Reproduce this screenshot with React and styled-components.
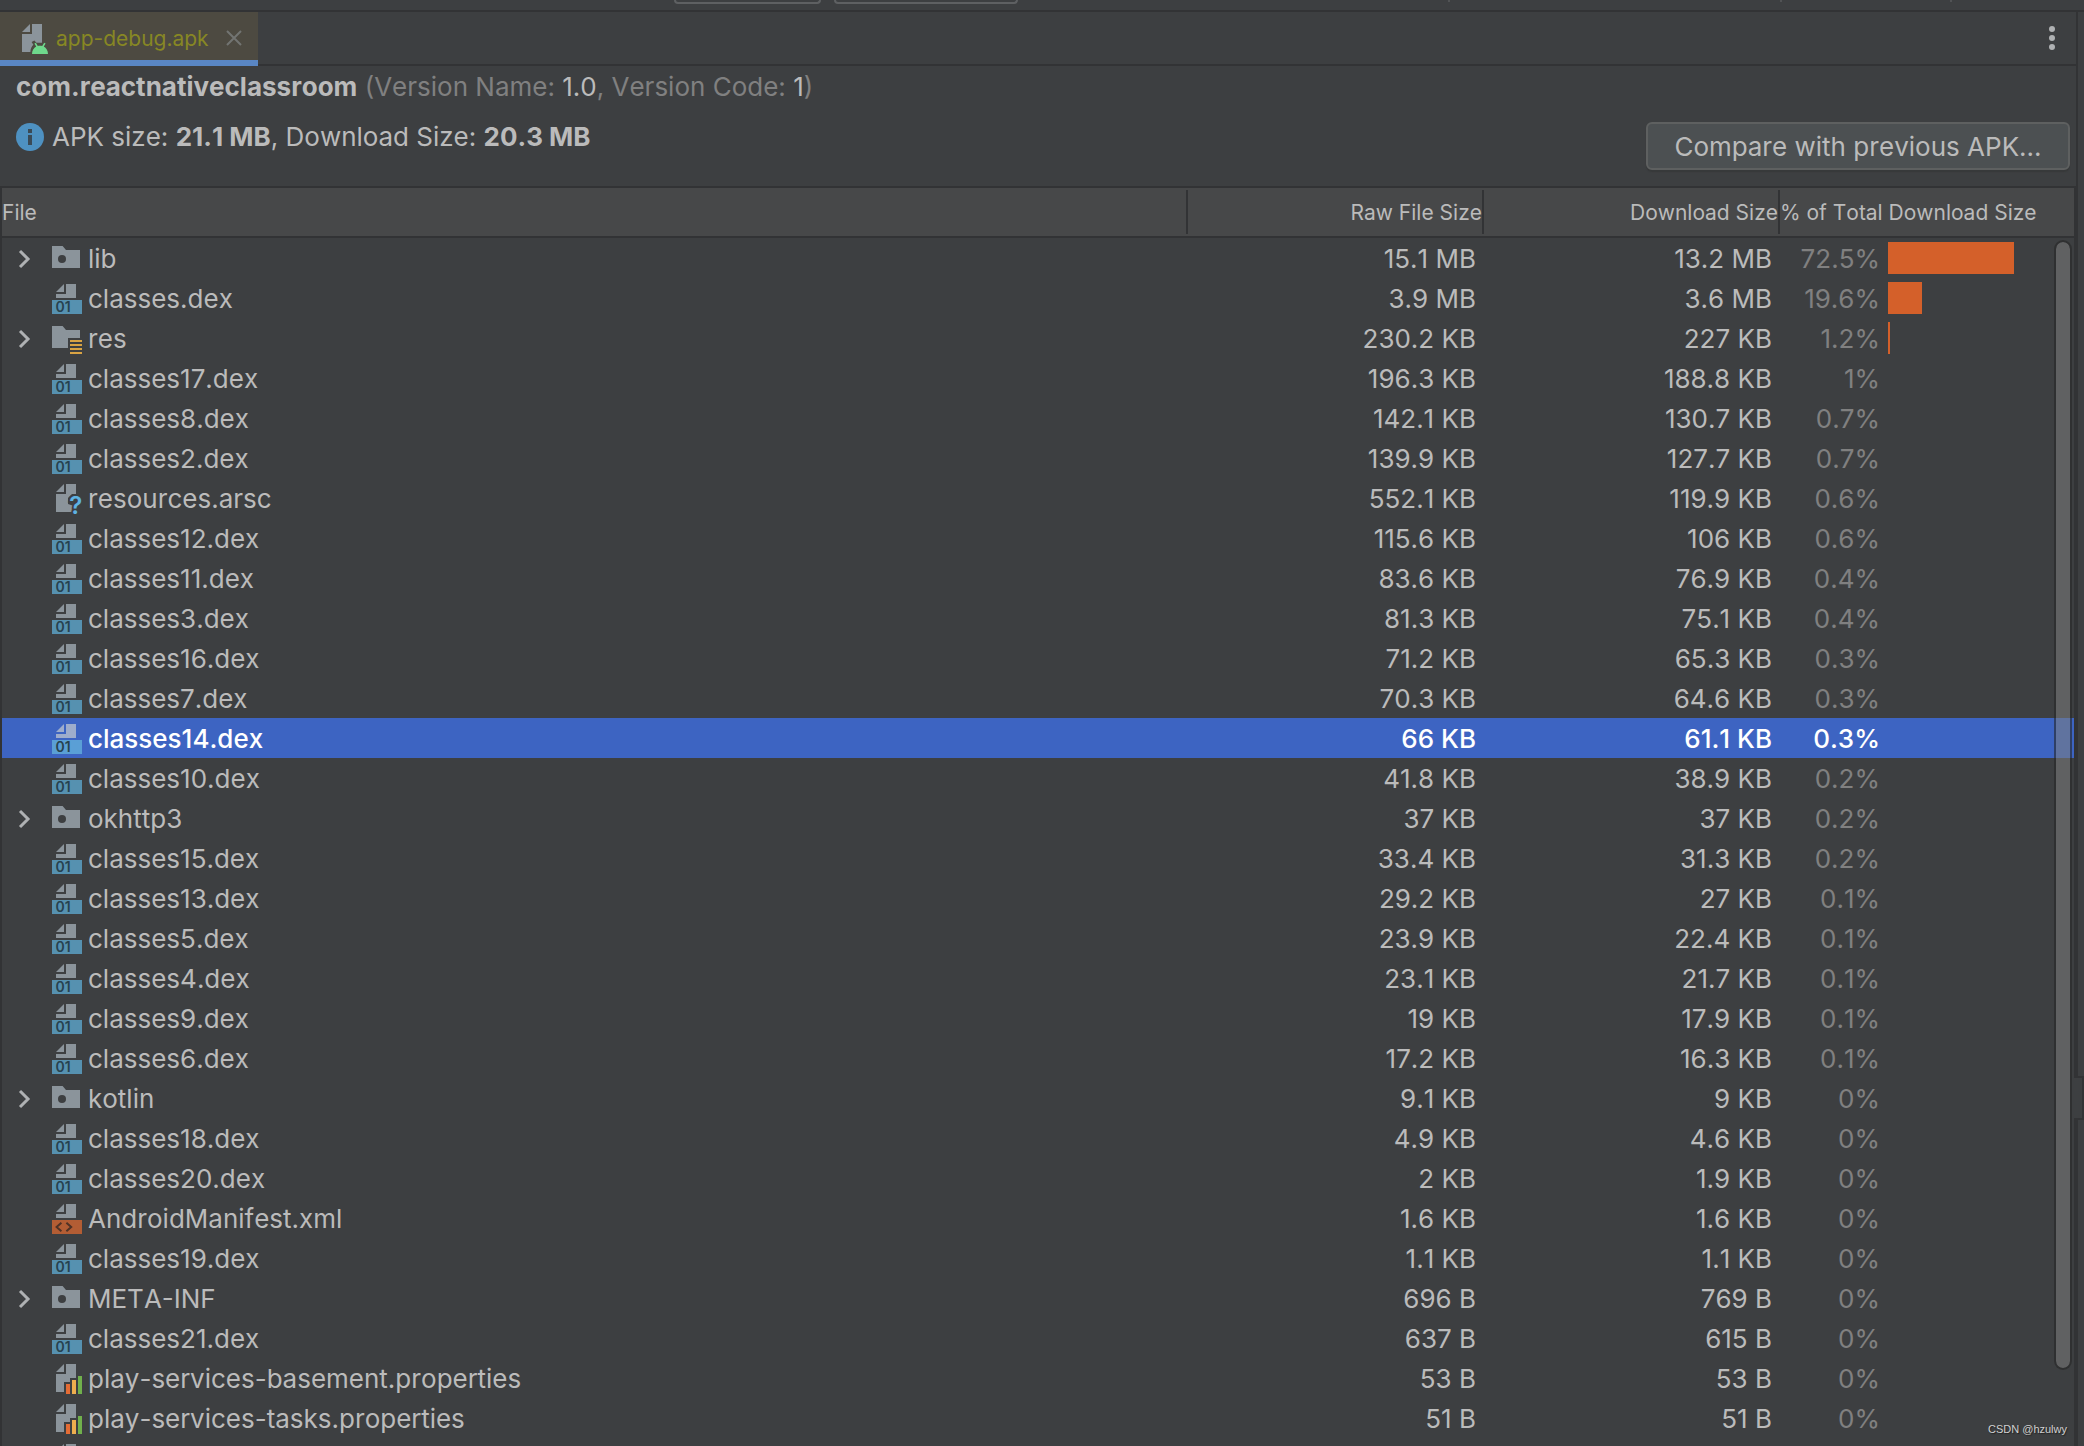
import React, { useState } from "react";
import styled, { createGlobalStyle } from "styled-components";

const c = {
  bg: "#3d3f41",
  line: "#323335",
  text: "#bbbbbb",
  muted: "#808080",
  header: "#474849",
  select: "#3d64c2",
  bar: "#d4602a",
  icon: "#8b949b",
};

const GlobalStyle = createGlobalStyle`
  * { box-sizing: border-box; }
  body { margin: 0; background: ${c.bg}; }
  button, table { font: inherit; font-kerning: inherit; color: inherit; }
`;

const Window = styled.div`
  position: relative;
  height: 100vh;
  overflow: hidden;
  display: flex;
  flex-direction: column;
  background: ${c.bg};
  color: ${c.text};
  font-family: Inter, "Liberation Sans", sans-serif;
  font-size: 26px;
  font-kerning: none;
  line-height: 32px;
`;

const ToolStrip = styled.div`
  flex: none;
  display: flex;
  height: 12px;
  padding-left: 674px;
  gap: 13px;
  border-bottom: 2px solid ${c.line};
`;

const StripButton = styled.span`
  width: ${(p) => p.$width}px;
  height: 4px;
  border: 2px solid #5e6062;
  border-top: 0;
  border-radius: 0 0 6px 6px;
`;

const StripDivider = styled.span`
  width: 2px;
  height: 2px;
  margin-left: ${(p) => p.$space}px;
  background: #515355;
`;

const Body = styled.div`
  flex: 1;
  min-height: 0;
  display: flex;
`;

const Editor = styled.main`
  flex: 1;
  min-width: 0;
  display: flex;
  flex-direction: column;
  border-right: 2px solid ${c.line};
`;

const Gutter = styled.aside`
  position: relative;
  flex: none;
  width: 6px;
`;

const GutterHandle = styled.span`
  position: absolute;
  top: 1064px;
  right: 0;
  width: 10px;
  height: 44px;
  background: ${c.bg};
  border: 2px solid ${c.line};
  border-left: 0;
`;

const TabBar = styled.div`
  flex: none;
  display: flex;
  justify-content: space-between;
  height: 54px;
  box-shadow: inset 0 -2px ${c.line};
`;

const Tab = styled.div`
  display: flex;
  align-items: center;
  width: 258px;
  padding: 4px 14px 0 16px;
  background: #4d4a41;
  border-bottom: 6px solid #5986c4;
  color: #878724;
  font-size: 21px;
`;

const TabName = styled.span`
  flex: 1;
  padding: 2px 0 0 8px;
`;

const IconButton = styled.button`
  display: flex;
  align-items: center;
  justify-content: center;
  width: ${(p) => p.$width || 20}px;
  height: ${(p) => p.$height || 20}px;
  padding: 0;
  border: 0;
  background: none;
`;

const Summary = styled.header`
  flex: none;
  display: flex;
  justify-content: space-between;
  align-items: flex-end;
  height: 120px;
  padding: 0 6px 16px 16px;
`;

const Facts = styled.div`
  align-self: flex-start;
  display: flex;
  flex-direction: column;
  gap: 18px;
  padding-top: 5px;
  white-space: nowrap;
`;

const Title = styled.h1`
  margin: 0;
  font-size: 26px;
  font-weight: 400;
  color: ${c.muted};
`;

const Strong = styled.b`
  font-weight: 700;
  color: ${c.text};
`;

const Value = styled.span`
  color: ${c.text};
`;

const SizeLine = styled.p`
  margin: 0;
  display: flex;
  align-items: center;
  gap: 8px;
`;

const CompareButton = styled.button`
  width: 424px;
  height: 48px;
  padding: 2px 0 0;
  border: 2px solid #5e6060;
  border-radius: 6px;
  background: #4c5052;
  box-shadow: 0 2px 1px #37393a;
`;

const Pane = styled.section`
  position: relative;
  flex: 1;
  min-height: 0;
  overflow: hidden;
  border: 2px solid ${c.line};
  border-bottom: 0;
`;

const Table = styled.table`
  width: 100%;
  table-layout: fixed;
  border-collapse: separate;
  border-spacing: 0;
`;

const Col = styled.col`
  width: ${(p) => (p.$width ? `${p.$width}px` : "auto")};
`;

const Head = styled.th`
  height: 50px;
  padding: 2px 0;
  border-bottom: 2px solid ${c.line};
  background: ${c.header};
  font-size: 21px;
  font-weight: 400;
  text-align: ${(p) => p.$align || "left"};
`;

const HeadLabel = styled.div`
  height: 44px;
  line-height: 46px;
  border-right: ${(p) => (p.$last ? "0" : `2px solid ${c.line}`)};
`;

const Row = styled.tr`
  height: 40px;
  background: ${(p) => (p.$selected ? c.select : "transparent")};
  color: ${(p) => (p.$selected ? "#ffffff" : c.text)};
  font-weight: ${(p) => (p.$selected ? 500 : 400)};
`;

const Cell = styled.td`
  height: 40px;
  padding: ${(p) => (p.$plain ? 2 : 0)}px 8px 0 0;
  text-align: right;
  white-space: nowrap;
`;

const NameLine = styled.div`
  display: flex;
  align-items: center;
  height: 32px;
  padding-left: ${(p) => (p.$leaf ? 48 : 12)}px;
`;

const FileName = styled.span`
  padding: 2px 0 0 6px;
`;

const Share = styled.div`
  display: flex;
  align-items: center;
  gap: 8px;
  height: 32px;
`;

const Percent = styled.span`
  width: 100px;
  padding-top: 2px;
  color: ${(p) => (p.$selected ? "#ffffff" : c.muted)};
`;

const Bar = styled.span`
  height: 32px;
  background: ${c.bar};
`;

const ScrollThumb = styled.div`
  position: absolute;
  top: 52px;
  right: 2px;
  width: 18px;
  height: 1130px;
  border: 2px solid rgba(38, 38, 38, 0.6);
  border-radius: 9px;
  background: rgba(128, 128, 128, 0.53);
  background-clip: padding-box;
`;

const Watermark = styled.small`
  position: absolute;
  right: 17px;
  bottom: 9px;
  color: #d0d0d0;
  font-family: "Liberation Sans", Arial, sans-serif;
  font-size: 11px;
  line-height: 16px;
  text-shadow: 1px 1px 1px #222222;
`;

const Svg = styled.svg`
  flex: none;
  display: block;
  overflow: visible;
`;

const Glyph = ({ children }) => (
  <Svg width="32" height="32" viewBox="0 0 16 16" aria-hidden="true">
    {children}
  </Svg>
);

const Folder = ({ res }) => (
  <Glyph>
    {res ? (
      <>
        <path fill={c.icon} d="M1 13V2h5.3L8 4h7v4H9v5z" />
        <path fill="#d9a343" d="M10 9h6v1h-6zM10 11h6v1h-6zM10 13h6v1h-6zM10 15h6v1h-6z" />
      </>
    ) : (
      <>
        <path fill={c.icon} d="M1 13V2h5.3L8 4h7v9z" />
        <circle cx="6" cy="8.5" r="2" fill={c.bg} />
      </>
    )}
  </Glyph>
);

const DocTop = ({ fill = c.icon }) => (
  <path fill={fill} d="M7 1 3 5h4zM8 1v5H3v2h10V1z" />
);

const Dex = ({ selected }) => (
  <Glyph>
    <DocTop fill={selected ? "#9eadcc" : c.icon} />
    <path fill={selected ? "#5a9fd6" : "#5691b0"} d="M1 9h15v7H1z" />
    <text x="2.8" y="15" fontSize="7" fontWeight="600" fontFamily="Inter, sans-serif" fill="#27424f">01</text>
  </Glyph>
);

const Xml = () => (
  <Glyph>
    <DocTop />
    <path fill="#b35d34" d="M1 9h15v7H1z" />
    <path fill="none" stroke="#4f3226" d="M5.7 10.4 3.3 12.5l2.4 2.1M8.2 10.4l2.4 2.1-2.4 2.1" />
  </Glyph>
);

const Unknown = () => (
  <Glyph>
    <path fill={c.icon} d="M7 1 3 5h4zM8 1v5H3v9h9v-3l-3-1V8l2-2h2V1z" />
    <text x="9.6" y="16" fontSize="12" fontWeight="600" fontFamily="Inter, sans-serif" fill="#5eb2e2" stroke={c.bg} strokeWidth="2" paintOrder="stroke">?</text>
  </Glyph>
);

const Props = () => (
  <Glyph>
    <path fill={c.icon} d="M7 1 3 5h4zM8 1v5H3v9h4v-5h3V8h3V1z" />
    <path fill="#e46c35" d="M8 11h2v5H8z" />
    <path fill="#edae4e" d="M11 9h2v7h-2z" />
    <path fill="#70b04c" d="M14 7h2v9h-2z" />
  </Glyph>
);

const Apk = () => (
  <Glyph>
    <path fill={c.icon} d="M7 1 3 5h4zM8 1v5H3v9h4.200c0-1.600.7-2.900 1.500-3.600L7.800 10l1.400-.8 1 1.200H13V1z" />
    <path fill="#6fd98c" d="M8 16c0-1.700.9-3 2.100-3.700l-.9-1.500.7-.4 1 1.600c.7-.2 1.500-.2 2.200 0l1-1.600.7.4-.9 1.500C15.100 13 16 14.300 16 16z" />
  </Glyph>
);

const Info = () => (
  <Svg width="28" height="28" viewBox="0 0 28 28" aria-hidden="true">
    <circle cx="14" cy="14" r="14" fill="#4e91c1" />
    <path fill="#3a4a56" d="M12 6h4v4h-4zM12 12h4v10h-4z" />
  </Svg>
);

const icons = {
  folder: <Folder />,
  res: <Folder res />,
  dex: <Dex />,
  xml: <Xml />,
  unknown: <Unknown />,
  props: <Props />,
};

const files = [
  ["folder", "lib", "15.1 MB", "13.2 MB", 72.5],
  ["dex", "classes.dex", "3.9 MB", "3.6 MB", 19.6],
  ["res", "res", "230.2 KB", "227 KB", 1.2],
  ["dex", "classes17.dex", "196.3 KB", "188.8 KB", 1],
  ["dex", "classes8.dex", "142.1 KB", "130.7 KB", 0.7],
  ["dex", "classes2.dex", "139.9 KB", "127.7 KB", 0.7],
  ["unknown", "resources.arsc", "552.1 KB", "119.9 KB", 0.6],
  ["dex", "classes12.dex", "115.6 KB", "106 KB", 0.6],
  ["dex", "classes11.dex", "83.6 KB", "76.9 KB", 0.4],
  ["dex", "classes3.dex", "81.3 KB", "75.1 KB", 0.4],
  ["dex", "classes16.dex", "71.2 KB", "65.3 KB", 0.3],
  ["dex", "classes7.dex", "70.3 KB", "64.6 KB", 0.3],
  ["dex", "classes14.dex", "66 KB", "61.1 KB", 0.3],
  ["dex", "classes10.dex", "41.8 KB", "38.9 KB", 0.2],
  ["folder", "okhttp3", "37 KB", "37 KB", 0.2],
  ["dex", "classes15.dex", "33.4 KB", "31.3 KB", 0.2],
  ["dex", "classes13.dex", "29.2 KB", "27 KB", 0.1],
  ["dex", "classes5.dex", "23.9 KB", "22.4 KB", 0.1],
  ["dex", "classes4.dex", "23.1 KB", "21.7 KB", 0.1],
  ["dex", "classes9.dex", "19 KB", "17.9 KB", 0.1],
  ["dex", "classes6.dex", "17.2 KB", "16.3 KB", 0.1],
  ["folder", "kotlin", "9.1 KB", "9 KB", 0],
  ["dex", "classes18.dex", "4.9 KB", "4.6 KB", 0],
  ["dex", "classes20.dex", "2 KB", "1.9 KB", 0],
  ["xml", "AndroidManifest.xml", "1.6 KB", "1.6 KB", 0],
  ["dex", "classes19.dex", "1.1 KB", "1.1 KB", 0],
  ["folder", "META-INF", "696 B", "769 B", 0],
  ["dex", "classes21.dex", "637 B", "615 B", 0],
  ["props", "play-services-basement.properties", "53 B", "53 B", 0],
  ["props", "play-services-tasks.properties", "51 B", "51 B", 0],
];

const FileRow = ({ file, selected, onSelect }) => {
  const [kind, name, raw, download, share] = file;
  const expandable = kind === "folder" || kind === "res";
  return (
    <Row $selected={selected} aria-selected={selected} onClick={onSelect}>
      <Cell>
        <NameLine $leaf={!expandable}>
          {expandable && (
            <IconButton $width={36} $height={32} aria-label={`Expand ${name}`}>
              <Svg width="36" height="32" viewBox="0 0 36 32" aria-hidden="true">
                <path fill="none" stroke="#afb1b3" strokeWidth="3" d="m6 9 8 8-8 8" />
              </Svg>
            </IconButton>
          )}
          {kind === "dex" ? <Dex selected={selected} /> : icons[kind]}
          <FileName>{name}</FileName>
        </NameLine>
      </Cell>
      <Cell $plain>{raw}</Cell>
      <Cell $plain>{download}</Cell>
      <Cell>
        <Share>
          <Percent $selected={selected}>{share}%</Percent>
          <Bar style={{ width: 2 * Math.floor(share * 0.87) }} />
        </Share>
      </Cell>
    </Row>
  );
};

export default function App() {
  const [selected, setSelected] = useState("classes14.dex");
  return (
    <Window>
      <GlobalStyle />
      <ToolStrip>
        <StripButton $width={147} />
        <StripButton $width={184} />
        <StripDivider $space={417} />
        <StripDivider $space={317} />
        <StripDivider $space={155} />
      </ToolStrip>
      <Body>
        <Editor>
          <TabBar>
            <Tab>
              <Apk />
              <TabName>app-debug.apk</TabName>
              <IconButton aria-label="Close tab">
                <Svg width="16" height="16" viewBox="0 0 16 16" aria-hidden="true">
                  <path stroke="#727472" strokeWidth="2" d="m1 1 14 14M15 1 1 15" />
                </Svg>
              </IconButton>
            </Tab>
            <IconButton $width={48} $height={52} aria-label="More">
              <Svg width="6" height="24" viewBox="0 0 6 24" fill="#afb1b3" aria-hidden="true">
                <circle cx="3" cy="3" r="3" />
                <circle cx="3" cy="12" r="3" />
                <circle cx="3" cy="21" r="3" />
              </Svg>
            </IconButton>
          </TabBar>
          <Summary>
            <Facts>
              <Title>
                <Strong>com.reactnativeclassroom</Strong> (Version Name: <Value>1.0</Value>, Version Code: <Value>1</Value>)
              </Title>
              <SizeLine>
                <Info />
                <span>
                  APK size: <Strong>21.1 MB</Strong>, Download Size: <Strong>20.3 MB</Strong>
                </span>
              </SizeLine>
            </Facts>
            <CompareButton>Compare with previous APK...</CompareButton>
          </Summary>
          <Pane>
            <Table>
              <colgroup>
                <Col />
                <Col $width={296} />
                <Col $width={296} />
                <Col $width={294} />
              </colgroup>
              <thead>
                <tr>
                  <Head><HeadLabel>File</HeadLabel></Head>
                  <Head $align="right"><HeadLabel>Raw File Size</HeadLabel></Head>
                  <Head $align="right"><HeadLabel>Download Size</HeadLabel></Head>
                  <Head><HeadLabel $last>% of Total Download Size</HeadLabel></Head>
                </tr>
              </thead>
              <tbody>
                {files.map((file) => (
                  <FileRow
                    key={file[1]}
                    file={file}
                    selected={file[1] === selected}
                    onSelect={() => setSelected(file[1])}
                  />
                ))}
                <Row>
                  <Cell colSpan={4}>
                    <NameLine $leaf><Props /></NameLine>
                  </Cell>
                </Row>
              </tbody>
            </Table>
            <ScrollThumb />
          </Pane>
        </Editor>
        <Gutter>
          <GutterHandle />
        </Gutter>
      </Body>
      <Watermark>CSDN @hzulwy</Watermark>
    </Window>
  );
}
